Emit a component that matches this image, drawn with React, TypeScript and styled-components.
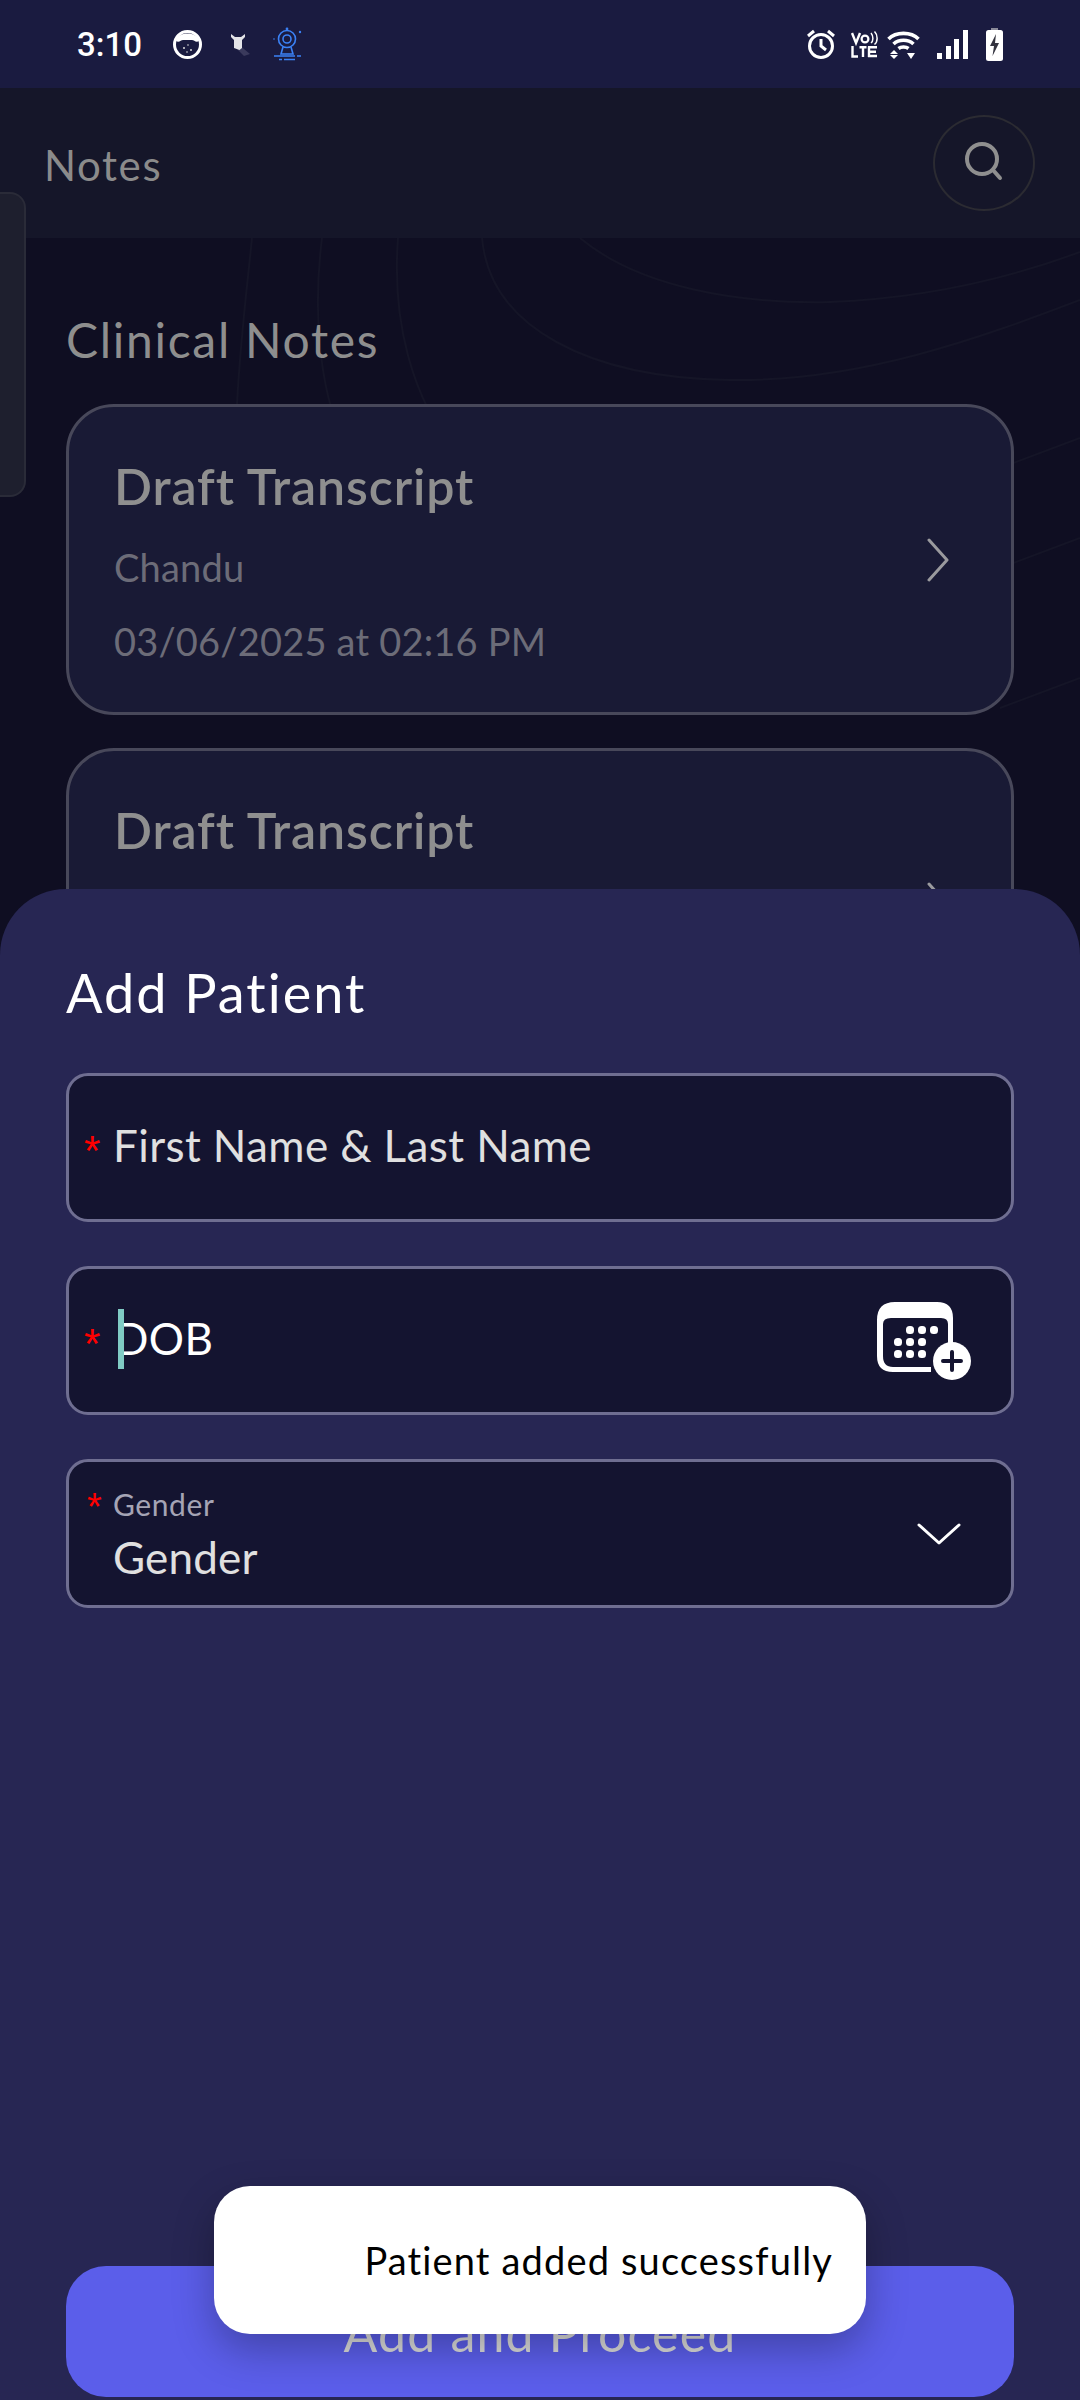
import React from "react";
import styled, { createGlobalStyle } from "styled-components";

const GlobalStyle = createGlobalStyle`
  html, body {
    margin: 0;
    padding: 0;
    background: #0f0e22;
  }
  * {
    box-sizing: border-box;
  }
`;

const FONT = `"Lato", "Noto Sans", sans-serif`;

const Screen = styled.div`
  position: relative;
  display: flex;
  flex-direction: column;
  width: 1080px;
  height: 2400px;
  overflow: hidden;
  background: #0f0e22;
  font-family: ${FONT};
`;

const StatusBar = styled.div`
  display: flex;
  align-items: center;
  justify-content: space-between;
  height: 88px;
  padding: 0 77px;
  background: #1a1b40;
  flex-shrink: 0;
`;

const StatusGroup = styled.div`
  display: flex;
  align-items: center;
`;

const Clock = styled.div`
  font-family: Roboto, sans-serif;
  font-weight: 500;
  font-size: 33px;
  color: #fff;
  margin-right: 31px;
`;

const StatusIcon = styled.svg<{ $gap?: number }>`
  display: block;
  flex-shrink: 0;
  margin-right: ${(p) => p.$gap ?? 0}px;
`;

const Header = styled.div`
  display: flex;
  align-items: center;
  justify-content: space-between;
  height: 150px;
  padding: 0 45px 0 44px;
  background: #151629;
  flex-shrink: 0;
`;

const HeaderTitle = styled.div`
  font-size: 42px;
  color: #8b8b8b;
  letter-spacing: 1.6px;
  padding-top: 3px;
`;

const SearchButton = styled.div`
  display: flex;
  align-items: center;
  justify-content: center;
  width: 102px;
  height: 96px;
  border-radius: 50%;
  border: 2px solid #2b2b32;
  padding-bottom: 4px;
`;

const SideTab = styled.div`
  position: absolute;
  left: 0;
  top: 192px;
  width: 26px;
  height: 305px;
  background: #1e1f2e;
  border: 2px solid #2a2b38;
  border-left: none;
  border-radius: 0 16px 16px 0;
`;

const Contours = styled.svg`
  position: absolute;
  left: 0;
  top: 0;
`;

const Content = styled.div`
  position: relative;
  display: flex;
  flex-direction: column;
  flex: 1;
  padding: 72px 66px 0;
  overflow: hidden;
`;

const SectionTitle = styled.div`
  position: relative;
  font-size: 48px;
  line-height: 60px;
  color: #8e8e8e;
  letter-spacing: 1.7px;
  margin-bottom: 34px;
`;

const CardList = styled.div`
  position: relative;
  display: flex;
  flex-direction: column;
  gap: 33px;
`;

const Card = styled.div`
  display: flex;
  align-items: center;
  justify-content: space-between;
  flex-shrink: 0;
  height: 311px;
  padding: 0 62px 0 45px;
  background: #191a35;
  border: 3px solid #48485a;
  border-radius: 48px;
`;

const CardBody = styled.div`
  display: flex;
  flex-direction: column;
`;

const CardTitle = styled.div`
  font-size: 50px;
  line-height: 64px;
  font-weight: 600;
  letter-spacing: 0.9px;
  color: #8f8f8f;
  margin-bottom: 24px;
`;

const CardMeta = styled.div`
  font-size: 38px;
  line-height: 50px;
  letter-spacing: 0.2px;
  color: #6c6c78;
  margin-bottom: 24px;

  &:last-child {
    margin-bottom: 0;
  }
`;

const Sheet = styled.div`
  position: absolute;
  left: 0;
  right: 0;
  top: 889px;
  bottom: 0;
  display: flex;
  flex-direction: column;
  padding: 70px 66px 3px;
  background: #272653;
  border-radius: 66px 66px 0 0;
`;

const SheetTitle = styled.div`
  font-size: 54px;
  line-height: 68px;
  letter-spacing: 2px;
  color: #fff;
  margin-bottom: 46px;
`;

const Fields = styled.div`
  display: flex;
  flex-direction: column;
  gap: 44px;
`;

const Field = styled.div`
  display: flex;
  align-items: center;
  height: 149px;
  padding: 0 0 0 15px;
  background: #141430;
  border: 3px solid #6f6e91;
  border-radius: 22px;
`;

const Asterisk = styled.span<{ $small?: boolean }>`
  font-family: "Liberation Sans", sans-serif;
  color: #f00;
  font-size: ${(p) => (p.$small ? 38 : 42)}px;
  line-height: 1;
  width: 29px;
  padding-left: ${(p) => (p.$small ? 3 : 0)}px;
  padding-top: 6px;
  flex-shrink: 0;
`;

const FieldText = styled.div<{ $bright?: boolean }>`
  position: relative;
  flex: 1;
  font-size: 44px;
  letter-spacing: 0.4px;
  padding-left: ${(p) => (p.$bright ? 2 : 0)}px;
  padding-bottom: ${(p) => (p.$bright ? 6 : 5)}px;
  color: ${(p) => (p.$bright ? "#fff" : "#e0e0e0")};
`;

const Caret = styled.span`
  position: absolute;
  left: 5px;
  top: -3px;
  width: 6px;
  height: 60px;
  background: #80cbc4;
`;

const GenderStack = styled.div`
  display: flex;
  flex: 1;
  flex-direction: column;
`;

const GenderLabel = styled.div`
  display: flex;
  align-items: center;
  font-size: 30px;
  line-height: 40px;
  letter-spacing: 0.6px;
  color: #a5a4b5;
`;

const GenderValue = styled.div`
  font-size: 44px;
  line-height: 58px;
  letter-spacing: 0.2px;
  color: #e0e0e0;
  padding-left: 29px;
  margin-top: 2px;
`;

const FieldIcon = styled.svg<{ $inset: number }>`
  display: block;
  flex-shrink: 0;
  margin-right: ${(p) => p.$inset}px;
`;

const PrimaryButton = styled.div`
  display: flex;
  align-items: center;
  justify-content: center;
  height: 131px;
  margin-top: auto;
  padding-top: 2px;
  background: #5b5eea;
  border-radius: 40px;
  font-size: 50px;
  letter-spacing: 1.2px;
  color: #dcdcdc;
`;

const Toast = styled.div`
  position: absolute;
  left: 214px;
  top: 2186px;
  display: flex;
  align-items: center;
  justify-content: flex-end;
  width: 652px;
  height: 148px;
  padding-right: 33px;
  background: #fff;
  border-radius: 36px;
  box-shadow: 0 16px 40px rgba(0, 0, 0, 0.28);
  font-size: 38px;
  letter-spacing: 1.15px;
  color: #000;
`;

const CardChevron = () => (
  <svg width="22" height="44" viewBox="0 0 22 44" fill="none">
    <path d="M2 2 L20 22 L2 42" stroke="#9a9a9e" strokeWidth="3" strokeLinecap="round" strokeLinejoin="round" />
  </svg>
);

const DraftCard = () => (
  <Card>
    <CardBody>
      <CardTitle>Draft Transcript</CardTitle>
      <CardMeta>Chandu</CardMeta>
      <CardMeta>03/06/2025 at 02:16 PM</CardMeta>
    </CardBody>
    <CardChevron />
  </Card>
);

const App = () => {
  return (
    <Screen>
      <GlobalStyle />
      <StatusBar>
        <StatusGroup>
          <Clock>3:10</Clock>
          {/* app notification icons */}
          <StatusIcon $gap={28} width="29" height="29" viewBox="0 0 29 29">
            <circle cx="14.5" cy="14.5" r="13" fill="#1a1b40" stroke="#fff" strokeWidth="3" />
            <path d="M3 11 C4 1 25 1 26 11 C23 13 21 10 19 10 H10 C8 10 6 13 3 11 Z" fill="#fff" />
            <circle cx="11" cy="18" r="1" fill="#ddd" />
            <circle cx="18" cy="20" r="1" fill="#ddd" />
            <circle cx="15" cy="15" r="0.8" fill="#ddd" />
            <circle cx="14" cy="22" r="0.8" fill="#ddd" />
          </StatusIcon>
          <StatusIcon $gap={21} width="20" height="24" viewBox="0 0 20 24">
            <path d="M8 12 L20 22 L14 24 L6 16 Z" fill="#3a3a5c" />
            <path d="M1 2 L5 5 H11 L15 2 L15 5 L12 8 V16 L9.5 18 L4 16 V8 L1 5 Z" fill="#e4e4e8" />
          </StatusIcon>
          <StatusIcon width="32" height="36" viewBox="0 0 32 36" fill="none" stroke="#3b82f6" strokeWidth="1.6">
            <circle cx="16" cy="13" r="8.5" />
            <circle cx="16" cy="13" r="4" />
            <circle cx="16" cy="3" r="0.6" />
            <path d="M12 21 L10 28 H22 L20 21" />
            <path d="M3 30 H24 M26 30 H30 M8 33.5 H11 M13 33.5 H24" />
            <circle cx="29" cy="6" r="1.2" fill="#3b82f6" stroke="none" />
            <circle cx="3" cy="13" r="0.8" fill="#3b82f6" stroke="none" />
          </StatusIcon>
        </StatusGroup>
        <StatusGroup>
          <StatusIcon $gap={16} width="28" height="30" viewBox="0 0 28 30" fill="none" stroke="#fff" strokeWidth="3">
            <circle cx="14" cy="17" r="11.5" />
            <path d="M14 10 V17 L19 21 M1 7 L7 2 M27 7 L21 2" />
          </StatusIcon>
          <StatusIcon $gap={9} width="27" height="27" viewBox="0 0 27 27" fill="none" stroke="#fff">
            <path d="M1 2 L5 12 L9 2" strokeWidth="2.4" />
            <circle cx="14" cy="8" r="3.4" strokeWidth="2.2" />
            <path d="M20 2 C22.5 5 22.5 10 20 12 M23.5 0.5 C27 4 27 10.5 23.5 13.5" strokeWidth="1.5" />
            <path d="M1.5 15 V25.5 H7 M8.5 16.2 H15.5 M12 16 V26 M18 26 V15.5 M17 16.2 H26 M18 20.7 H25 M17 25 H26" strokeWidth="2.4" />
          </StatusIcon>
          <StatusIcon $gap={17} width="33" height="29" viewBox="0 0 33 29" fill="none" stroke="#fff" strokeWidth="3.6">
            <path d="M1.5 9 C9 1.5 24 1.5 31.5 9" />
            <path d="M6.5 14 C12 9 21 9 26.5 14" />
            <path d="M11.5 18.5 C14 16.5 19 16.5 21.5 18.5" />
            <path d="M7 20 L11 24 H3 Z M3 25 H11 L7 29 Z" fill="#fff" stroke="none" />
            <path d="M20 23 H28 L24 29 Z" fill="#fff" stroke="none" />
          </StatusIcon>
          <StatusIcon $gap={18} width="31" height="29" viewBox="0 0 31 29" fill="#fff">
            <rect x="0" y="23" width="5" height="6" />
            <rect x="9" y="16" width="5" height="13" />
            <rect x="17" y="9" width="5" height="20" />
            <rect x="26" y="0" width="5" height="29" />
          </StatusIcon>
          <StatusIcon width="17" height="33" viewBox="0 0 17 33">
            <rect x="5" y="0" width="7" height="3" fill="#8a8a99" />
            <rect x="0" y="2" width="17" height="31" rx="2.5" fill="#fff" />
            <path d="M10 6 L4 18 H8 L6.5 28 L13 15 H9 Z" fill="#33333f" />
          </StatusIcon>
        </StatusGroup>
      </StatusBar>

      <Header>
        <HeaderTitle>Notes</HeaderTitle>
        <SearchButton>
          <svg width="40" height="40" viewBox="0 0 40 40" fill="none" stroke="#8f8f8f" strokeWidth="4" strokeLinecap="round">
            <circle cx="18" cy="18" r="15" />
            <path d="M29 29 L36 37" />
          </svg>
        </SearchButton>
      </Header>

      <Content>
        {/* faint topographic lines behind the list */}
        <Contours width="1080" height="700" viewBox="0 0 1080 700" fill="none" stroke="#151527" strokeWidth="2">
          <path d="M252 0 C246 60 238 120 236 190" />
          <path d="M322 0 C312 80 320 160 350 220" />
          <path d="M398 0 C392 80 410 160 460 220" />
          <path d="M482 0 C490 90 590 140 730 142 C860 144 980 100 1080 62" />
          <path d="M580 0 C640 50 740 66 830 64 C930 60 1010 40 1080 14" />
          <path d="M1000 230 L1080 200 M1000 330 L1080 300 M1000 470 L1080 440" />
        </Contours>
        <SectionTitle>Clinical Notes</SectionTitle>
        <CardList>
          <DraftCard />
          <DraftCard />
        </CardList>
      </Content>

      <SideTab />

      <Sheet>
        <SheetTitle>Add Patient</SheetTitle>
        <Fields>
          <Field>
            <Asterisk>*</Asterisk>
            <FieldText>First Name &amp; Last Name</FieldText>
          </Field>
          <Field>
            <Asterisk>*</Asterisk>
            <FieldText $bright>
              <Caret />
              DOB
            </FieldText>
            <FieldIcon $inset={40} width="94" height="78" viewBox="0 0 94 78">
              <path
                d="M18 0 H60 Q76 0 76 16 V46 H71 V22 Q71 16 64 16 H14 Q6 16 6 22 V54 Q6 65 16 65 H54 V70 H16 Q0 70 0 54 V18 Q0 0 18 0 Z"
                fill="#fff"
              />
              <g fill="#fff">
                <rect x="29" y="24" width="8" height="8" rx="3.5" />
                <rect x="41" y="24" width="8" height="8" rx="3.5" />
                <rect x="53" y="24" width="8" height="8" rx="3.5" />
                <rect x="17" y="36" width="8" height="8" rx="3.5" />
                <rect x="29" y="36" width="8" height="8" rx="3.5" />
                <rect x="41" y="36" width="8" height="8" rx="3.5" />
                <rect x="17" y="48" width="8" height="8" rx="3.5" />
                <rect x="29" y="48" width="8" height="8" rx="3.5" />
                <rect x="41" y="48" width="8" height="8" rx="3.5" />
              </g>
              <circle cx="75" cy="59" r="19" fill="#fff" />
              <path d="M75 50 V68 M66 59 H84" stroke="#141430" strokeWidth="4" strokeLinecap="round" />
            </FieldIcon>
          </Field>
          <Field>
            <GenderStack>
              <GenderLabel>
                <Asterisk $small>*</Asterisk>
                Gender
              </GenderLabel>
              <GenderValue>Gender</GenderValue>
            </GenderStack>
            <FieldIcon $inset={50} width="44" height="24" viewBox="0 0 44 24" fill="none">
              <path d="M2 3 L22 21 L42 3" stroke="#fff" strokeWidth="3" strokeLinecap="round" strokeLinejoin="round" />
            </FieldIcon>
          </Field>
        </Fields>
        <PrimaryButton>Add and Proceed</PrimaryButton>
      </Sheet>

      <Toast>Patient added successfully</Toast>
    </Screen>
  );
};

export default App;
